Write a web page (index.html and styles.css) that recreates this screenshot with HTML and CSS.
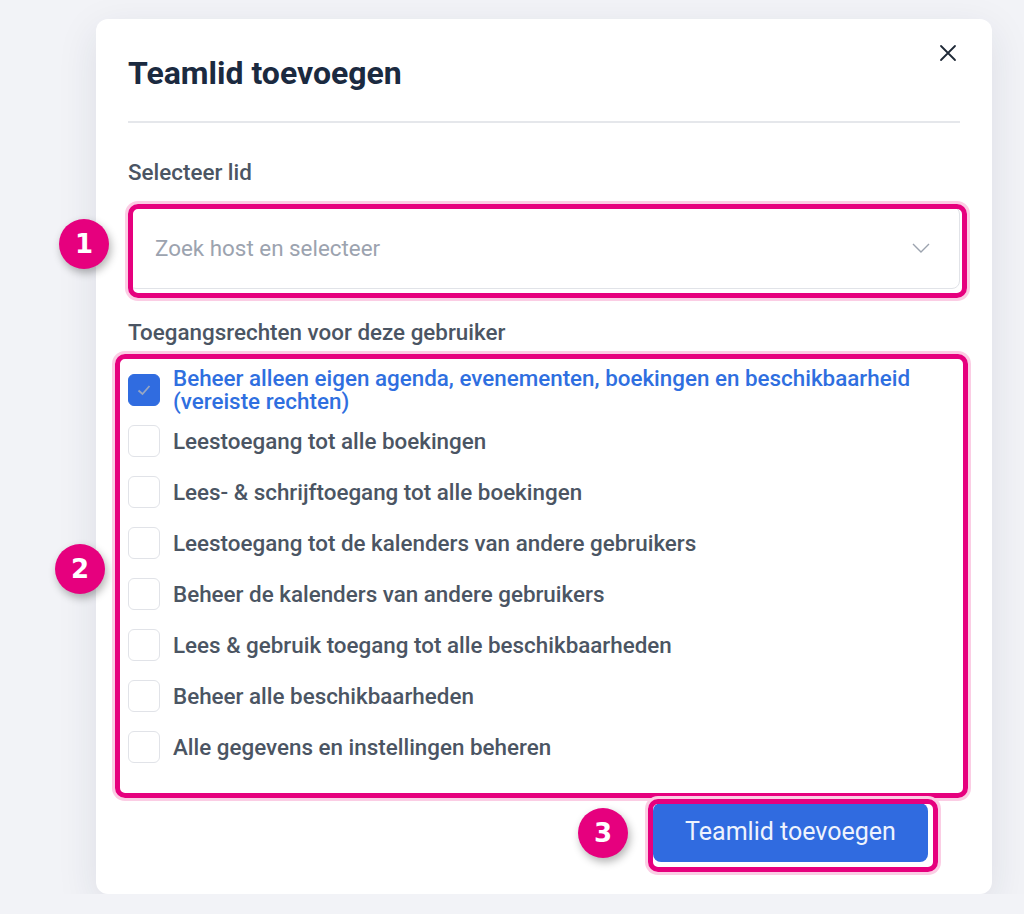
FILE: index.html
```html
<!DOCTYPE html>
<html lang="nl">
  <head>
    <meta charset="UTF-8" />
    <title>Teamlid toevoegen</title>
    <link rel="stylesheet" href="styles.css">
  </head>
  <body>
    <div class="modal">
      <div class="modal-head">
        <h1 class="modal-title">Teamlid toevoegen</h1>
        <button class="modal-close" aria-label="Sluiten">
          <svg width="18" height="18" viewBox="0 0 18 18"><path d="M2 2L16 16M16 2L2 16" stroke="#1f2937" stroke-width="1.8" stroke-linecap="round"/></svg>
        </button>
      </div>

      <p class="field-label">Selecteer lid</p>
      <div class="select-box marked">
        <span class="select-placeholder">Zoek host en selecteer</span>
        <svg class="select-arrow" width="18" height="10" viewBox="0 0 18 10"><path d="M1 1L9 9L17 1" fill="none" stroke="#9ca3af" stroke-width="1.4"/></svg>
        <span class="step step-1">1</span>
      </div>

      <p class="field-label label-rights">Toegangsrechten voor deze gebruiker</p>
      <ul class="rights marked">
        <li class="right checked">
          <span class="check">
            <svg width="18" height="18" viewBox="0 0 18 18"><path d="M3.5 9.5L7.5 13L14.5 5" fill="none" stroke="#97a6c2" stroke-width="1.8"/></svg>
          </span>
          <span class="right-text">Beheer alleen eigen agenda, evenementen, boekingen en beschikbaarheid (vereiste rechten)</span>
        </li>
        <li class="right"><span class="check"></span><span class="right-text">Leestoegang tot alle boekingen</span></li>
        <li class="right"><span class="check"></span><span class="right-text">Lees- &amp; schrijftoegang tot alle boekingen</span></li>
        <li class="right"><span class="check"></span><span class="right-text">Leestoegang tot de kalenders van andere gebruikers</span></li>
        <li class="right"><span class="check"></span><span class="right-text">Beheer de kalenders van andere gebruikers</span></li>
        <li class="right"><span class="check"></span><span class="right-text">Lees &amp; gebruik toegang tot alle beschikbaarheden</span></li>
        <li class="right"><span class="check"></span><span class="right-text">Beheer alle beschikbaarheden</span></li>
        <li class="right"><span class="check"></span><span class="right-text">Alle gegevens en instellingen beheren</span></li>
        <span class="step step-2">2</span>
      </ul>

      <div class="modal-foot">
        <button class="btn-add marked">Teamlid toevoegen<span class="step step-3">3</span></button>
      </div>
    </div>
  </body>
</html>
```

FILE: styles.css
```css
* {
  box-sizing: border-box;
}

body {
  margin: 0;
  background-color: #f2f3f7;
  font-family: Roboto, "Liberation Sans", sans-serif;
}

.modal {
  position: relative;
  width: 896px;
  height: 875px;
  margin: 19px 0 0 96px;
  padding: 36px 32px 0;
  background-color: #fff;
  border-radius: 12px;
  box-shadow: 0 12px 40px rgba(30, 40, 70, 0.1);
}

.modal-head {
  padding-bottom: 30px;
  border-bottom: 2px solid #e5e7eb;
}

.modal-title {
  margin: 0;
  font-size: 32px;
  line-height: 36px;
  font-weight: 700;
  color: #1b2a40;
}

.modal-close {
  position: absolute;
  top: 25px;
  right: 35px;
  padding: 0;
  border: none;
  background: none;
  cursor: pointer;
}

.field-label {
  margin: 37px 0 0;
  font-size: 22.4px;
  line-height: 24px;
  font-weight: 500;
  color: #4b5563;
}

.label-rights {
  margin-top: 31px;
}

/* pink annotation frame round a marked block */
.marked {
  position: relative;
}

.marked::after {
  content: "";
  position: absolute;
  border: 5px solid #e6007e;
  border-radius: 10px;
  box-shadow: 0 0 0 3px #fbcde4;
  pointer-events: none;
}

.select-box {
  display: flex;
  align-items: center;
  justify-content: space-between;
  height: 83px;
  margin-top: 22px;
  padding: 0 29px 0 26px;
  border: 1px solid #e1e3e8;
  border-radius: 8px;
}

.select-box::after {
  top: -3px;
  left: -1px;
  right: -8px;
  bottom: -10px;
}

.select-placeholder {
  font-size: 22.4px;
  color: #9ca3af;
}

.rights {
  display: flex;
  flex-direction: column;
  gap: 19px;
  margin: 30px 0 0;
  padding: 0;
  list-style: none;
}

.rights::after {
  top: -20px;
  left: -13px;
  right: -8px;
  bottom: -35px;
}

.right {
  display: flex;
  align-items: center;
  gap: 13px;
  height: 32px;
}

.check {
  display: flex;
  justify-content: center;
  align-items: center;
  flex-shrink: 0;
  width: 32px;
  height: 32px;
  border: 1px solid #e1e3e8;
  border-radius: 6px;
  background-color: #fff;
}

.right-text {
  font-size: 22.4px;
  line-height: 23px;
  font-weight: 500;
  color: #4b5563;
}

.checked .check {
  border-color: #306ce0;
  background-color: #306ce0;
}

.checked .right-text {
  color: #2f6fe0;
}

.modal-foot {
  display: flex;
  justify-content: flex-end;
  margin-top: 40px;
  padding-right: 32px;
}

.btn-add {
  width: 275px;
  height: 59px;
  padding-bottom: 4px;
  border: none;
  border-radius: 8px;
  background-color: #306be0;
  color: #eef3fd;
  font-family: Roboto, "Liberation Sans", sans-serif;
  font-size: 25px;
  cursor: pointer;
}

.btn-add::after {
  top: -4px;
  left: -5px;
  right: -10px;
  bottom: -10px;
}

/* numbered step badges */
.step {
  position: absolute;
  display: flex;
  justify-content: center;
  align-items: center;
  width: 50px;
  height: 50px;
  border-radius: 50%;
  background-color: #e6007e;
  color: #fff;
  font-family: "DejaVu Sans", sans-serif;
  font-size: 26px;
  font-weight: 700;
  box-shadow: 2px 4px 8px rgba(0, 0, 0, 0.3);
}

.step-1 {
  top: 12px;
  left: -70px;
}

.step-2 {
  top: 170px;
  left: -73px;
}

.step-3 {
  top: 5px;
  left: -75px;
}
```
